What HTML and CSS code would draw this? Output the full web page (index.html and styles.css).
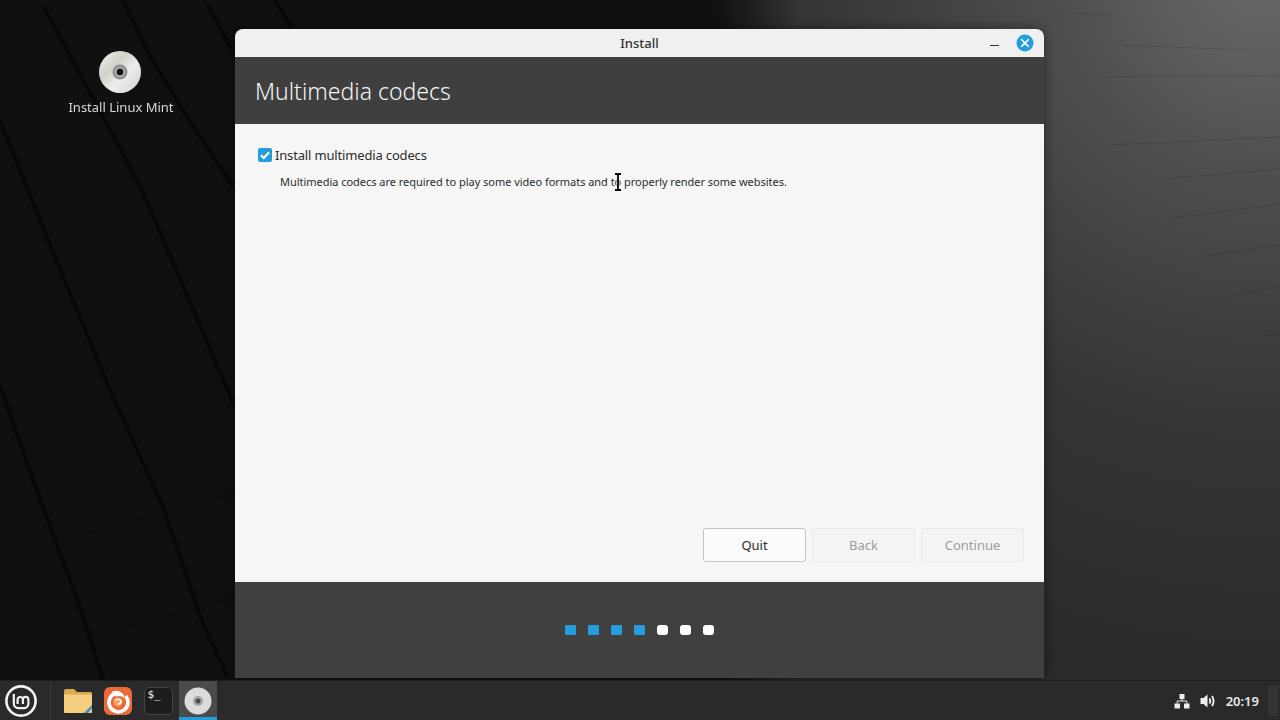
FILE: index.html
```html
<!DOCTYPE html>
<html lang="en">
<head>
<meta charset="utf-8">
<title>Install</title>
<link rel="stylesheet" href="styles.css">
</head>
<body>
<div class="screen">
  <main class="desktop">
    <svg class="wallpaper" viewBox="0 0 1280 680" width="1280" height="680" aria-hidden="true">
      <defs>
        <radialGradient id="wall" gradientUnits="userSpaceOnUse" cx="1265" cy="-30" r="760">
          <stop offset="0" stop-color="#6a6a6a"/>
          <stop offset=".3" stop-color="#4c4c4c"/>
          <stop offset=".6" stop-color="#353535"/>
          <stop offset="1" stop-color="#292929"/>
        </radialGradient>
        <linearGradient id="fade" gradientUnits="userSpaceOnUse" x1="715" y1="0" x2="800" y2="0">
          <stop offset="0" stop-color="#101011"/>
          <stop offset="1" stop-color="#101011" stop-opacity="0"/>
        </linearGradient>
        <filter id="soft" x="-10%" y="-10%" width="120%" height="120%"><feGaussianBlur stdDeviation="1"/></filter>
      </defs>
      <rect width="1280" height="680" fill="url(#wall)"/>
      <rect width="1000" height="680" fill="url(#fade)"/>
      <g class="creases" filter="url(#soft)">
        <path d="M43 6 L80 74 L110 130 L140 186 L187 295 L233 403"/>
        <path d="M123 0 L150 56 L187 117 L233 186"/>
        <path d="M0 121 L60 269 L110 390 L163 507 L200 616 L227 676"/>
        <path d="M0 386 L40 499 L80 607 L103 680"/>
        <path d="M207 4 L233 52"/>
        <path d="M275 0 L292 28"/>
      </g>
      <g class="creases-thin">
        <path d="M60 540 L233 494"/>
        <path d="M97 635 L233 598"/>
      </g>
      <g class="creases-light">
        <path d="M1073 13 L1113 15"/>
        <path d="M1123 45 L1250 50"/>
        <path d="M1103 77 L1280 76"/>
        <path d="M1110 145 L1280 137"/>
        <path d="M1163 179 L1280 169"/>
        <path d="M1167 219 L1280 204"/>
        <path d="M1203 256 L1280 245"/>
        <path d="M1237 295 L1280 286"/>
        <path d="M1263 336 L1280 333"/>
      </g>
    </svg>

    <div class="desktop-icon">
      <svg class="disc" viewBox="0 0 44 44" width="44" height="44" aria-hidden="true">
        <use href="#disc-art"/>
      </svg>
      <span class="desktop-label">Install Linux Mint</span>
    </div>

    <section class="window">
      <header class="titlebar">
        <span class="title">Install</span>
        <div class="window-controls">
          <span class="minimize"></span>
          <span class="close">
            <svg viewBox="0 0 18 18" width="18" height="18" aria-hidden="true">
              <circle cx="9" cy="9" r="8.5" fill="#239ddb"/>
              <path d="M5.6 5.6 L12.4 12.4 M12.4 5.6 L5.6 12.4" stroke="#fff" stroke-width="1.5" stroke-linecap="round"/>
            </svg>
          </span>
        </div>
      </header>
      <div class="banner"><h1>Multimedia codecs</h1></div>
      <div class="content">
        <div class="body">
          <label class="check-row">
            <span class="checkbox">
              <svg viewBox="0 0 14 14" width="14" height="14" aria-hidden="true">
                <path d="M3 7.4 L5.8 10 L11 4.2" fill="none" stroke="#fff" stroke-width="2.2"/>
              </svg>
            </span>
            <span class="check-label">Install multimedia codecs</span>
          </label>
          <p class="description">Multimedia codecs are required to play some video formats and to properly render some websites.</p>
        </div>
        <div class="actions">
          <button class="btn">Quit</button>
          <button class="btn btn-disabled">Back</button>
          <button class="btn btn-disabled">Continue</button>
        </div>
      </div>
      <footer class="progress">
        <span class="dot dot-done"></span>
        <span class="dot dot-done"></span>
        <span class="dot dot-done"></span>
        <span class="dot dot-done"></span>
        <span class="dot"></span>
        <span class="dot"></span>
        <span class="dot"></span>
      </footer>
    </section>

    <svg class="cursor" viewBox="0 0 10 20" width="10" height="20" aria-hidden="true">
      <path class="cursor-halo" d="M2 2 H4 L5 3 L6 2 H8 M5 3 V17 M2 18 H4 L5 17 L6 18 H8"/>
      <path class="cursor-core" d="M2 2 H4 L5 3 L6 2 H8 M5 3 V17 M2 18 H4 L5 17 L6 18 H8"/>
    </svg>
  </main>

  <nav class="taskbar">
    <div class="menu-btn">
      <svg viewBox="0 0 32 32" width="32" height="32" aria-hidden="true">
        <circle cx="16" cy="16" r="14.6" fill="none" stroke="#f2f2f2" stroke-width="2.6"/>
        <path d="M8.800 9 V18.500 A4.600 4.600 0 0 0 13.400 23.100 H19 A4.400 4.400 0 0 0 23.400 18.700 V14.200 A2.800 2.800 0 0 0 17.900 14.200 V19 M17.900 14.200 A2.700 2.700 0 0 0 12.600 14.200 V19" fill="none" stroke="#f2f2f2" stroke-width="2.200"/>
      </svg>
    </div>
    <span class="separator"></span>
    <div class="launcher">
      <span class="app">
        <svg viewBox="0 0 30 26" width="30" height="26" aria-hidden="true">
          <path d="M1 3 Q1 1 3 1 H11 L14 4 H28 Q29 4 29 6 V9 H1 Z" fill="#d9a94f"/>
          <path d="M1 6.500 H29 V24 Q29 25 28 25 H2 Q1 25 1 24 Z" fill="#f6cf7e"/>
          <path d="M21 25 L29 17 V20 L25 25 Z" fill="#3a8fb7"/>
        </svg>
      </span>
      <span class="app">
        <svg viewBox="0 0 28 28" width="28" height="28" aria-hidden="true">
          <rect width="28" height="28" rx="6" fill="#ec6a37"/>
          <path d="M11 6.500 A9.500 9.500 0 1 0 21.500 9" fill="none" stroke="#fff" stroke-width="3.600"/>
          <path d="M8 4.500 Q14 2.500 18 6 Q21 8.500 20 11 Q17 8 12 9.500 Z" fill="#fff"/>
          <circle cx="14" cy="15" r="4.500" fill="#f6a25e"/>
          <path d="M11 13 Q15 11 17 14 Q17 17 14 17" fill="none" stroke="#fff" stroke-width="1.500"/>
        </svg>
      </span>
      <span class="app">
        <span class="terminal">$_</span>
      </span>
      <span class="app app-active">
        <svg viewBox="0 0 28 28" width="28" height="28" aria-hidden="true">
          <circle cx="14" cy="14" r="13.500" fill="#dcdcdc"/>
          <circle cx="14" cy="14" r="5" fill="#a5a5a5"/>
          <circle cx="14" cy="14" r="2.500" fill="#4a4a4a"/>
        </svg>
      </span>
    </div>
    <div class="tray">
      <svg class="tray-net" viewBox="0 0 16 16" width="16" height="16" aria-hidden="true">
        <path d="M5.500 1 H10.500 V6 H5.500 Z M0.500 10.500 H6 V15.500 H0.500 Z M10 10.500 H15.500 V15.500 H10 Z" fill="#ededed"/>
        <path d="M8 5 V8 M3.200 10.500 V8 H12.800 V10.500" fill="none" stroke="#ededed" stroke-width="1"/>
      </svg>
      <svg class="tray-vol" viewBox="0 0 16 16" width="16" height="16" aria-hidden="true">
        <path d="M0.500 5 H3.500 L7.500 1.500 V14.500 L3.500 11 H0.500 Z" fill="#ededed"/>
        <path d="M9.500 5.500 Q11 8 9.500 10.500 M12 3 Q15.200 8 12 13" fill="none" stroke="#ededed" stroke-width="1.900"/>
      </svg>
      <span class="clock">20:19</span>
      <span class="show-desktop"></span>
    </div>
  </nav>
</div>

<svg class="defs" width="0" height="0" aria-hidden="true">
  <defs>
    <linearGradient id="disc-sheen" x1="0" y1="0" x2="1" y2="1">
      <stop offset="0" stop-color="#f2f2f2"/>
      <stop offset=".35" stop-color="#cfd3c9"/>
      <stop offset=".6" stop-color="#ededed"/>
      <stop offset="1" stop-color="#cfcfcf"/>
    </linearGradient>
    <g id="disc-art">
      <circle cx="22" cy="22" r="21" fill="url(#disc-sheen)"/>
      <circle cx="22" cy="22" r="7.500" fill="#8d8d8d"/>
      <circle cx="22" cy="22" r="5.500" fill="#a8a8a8"/>
      <circle cx="22" cy="22" r="3.200" fill="#111"/>
    </g>
  </defs>
</svg>
</body>
</html>
```
FILE: styles.css
```css
* { box-sizing: border-box; }
html, body { margin: 0; padding: 0; width: 1280px; height: 720px; overflow: hidden; }
body { font-family: "Noto Sans", "Open Sans", sans-serif; background: #101011; }

.screen { display: flex; flex-direction: column; width: 1280px; height: 720px; }
.desktop { position: relative; flex: 1; overflow: hidden; }
.wallpaper { position: absolute; inset: 0; display: block; }
.creases path { fill: none; stroke: #050505; stroke-width: 2.5; opacity: .8; }
.creases-thin path { fill: none; stroke: #070707; stroke-width: 1; opacity: .7; }
.creases-light path { fill: none; stroke: #000; stroke-width: 1; opacity: .12; }
.defs { position: absolute; }

.desktop-icon { position: absolute; left: 61px; top: 50px; width: 120px; display: flex; flex-direction: column; align-items: center; gap: 4px; }
.disc { display: block; margin-left: -2px; }
.desktop-label { color: #d8d8d8; font-size: 13px; line-height: 18px; white-space: nowrap; }

.window { position: absolute; left: 235px; top: 29px; width: 809px; height: 649px; display: flex; flex-direction: column; box-shadow: 0 0 12px rgba(0,0,0,.45); border-radius: 8px 8px 0 0; }
.titlebar { position: relative; height: 28px; flex: none; background: #f0f0f0; border-radius: 8px 8px 0 0; display: flex; align-items: center; justify-content: center; }
.title { font-size: 13px; font-weight: 500; color: #333; }
.window-controls { position: absolute; right: 10px; top: 5px; display: flex; align-items: center; gap: 17px; }
.minimize { width: 9px; height: 1px; background: #333; margin-top: 5px; }
.close { display: block; width: 18px; height: 18px; }
.close svg { display: block; }

.banner { height: 67px; flex: none; background: #3f3f3f; padding: 2px 20px 0; display: flex; align-items: center; }
.banner h1 { margin: 0; font-size: 23px; font-weight: 300; color: #f4f4f4; line-height: 1; }

.content { flex: 1; background: #f6f6f6; display: flex; flex-direction: column; justify-content: space-between; padding: 23px 20px 20px 23px; }
.check-row { display: flex; align-items: center; gap: 3px; height: 16px; }
.checkbox { width: 14px; height: 14px; border-radius: 2px; background: #239ddb; display: block; }
.checkbox svg { display: block; }
.check-label { font-size: 13px; letter-spacing: -.16px; color: #2c2c2c; }
.description { margin: 11px 0 0 22px; font-size: 11px; letter-spacing: -.03px; line-height: 16px; color: #2c2c2c; }

.actions { display: flex; justify-content: flex-end; gap: 6px; }
.btn { width: 103px; height: 34px; border: 1px solid #c4c4c4; border-radius: 3px; background: #fbfbfb; font: inherit; font-size: 13px; color: #2c2c2c; padding: 0; }
.btn-disabled { background: #f4f4f4; border-color: #e8e8e8; color: #9d9d9d; }

.progress { height: 96px; flex: none; background: #404040; display: flex; align-items: center; justify-content: center; gap: 12px; }
.dot { width: 11px; height: 10px; border-radius: 3px; background: #fff; }
.dot-done { background: #239ddb; border-radius: 1px; }

.cursor { position: absolute; left: 613px; top: 172px; }
.cursor-halo { fill: none; stroke: #fff; stroke-width: 3; opacity: .7; }
.cursor-core { fill: none; stroke: #000; stroke-width: 1.8; }

.taskbar { height: 40px; flex: none; background: #2a2a2a; border-top: 1px solid #1c1c1c; display: flex; align-items: center; }
.menu-btn { width: 43px; display: flex; justify-content: center; }
.menu-btn svg { display: block; margin-left: -1px; }
.separator { width: 1px; height: 39px; background: #3d3d3d; margin-left: 7px; }
.launcher { display: flex; margin-left: 7px; }
.app { width: 40px; height: 39px; display: flex; align-items: center; justify-content: center; }
.app-active { width: 38px; margin-left: 1px; background: #4b4b4b; border-bottom: 3px solid #239ddb; padding-top: 3px; }
.terminal { display: block; width: 29px; height: 28px; background: #1d1d1d; border: 1px solid #444; border-radius: 5px; color: #f0f0f0; font-size: 11px; line-height: 13px; padding: 0 0 0 3px; font-family: "DejaVu Sans Mono", monospace; }
.tray { margin-left: auto; margin-right: 2px; display: flex; align-items: center; gap: 10px; height: 39px; }
.clock { color: #e8e8e8; font-size: 13px; font-weight: 600; }
.show-desktop { width: 10px; height: 30px; background: #343434; margin-left: -1px; }
```
